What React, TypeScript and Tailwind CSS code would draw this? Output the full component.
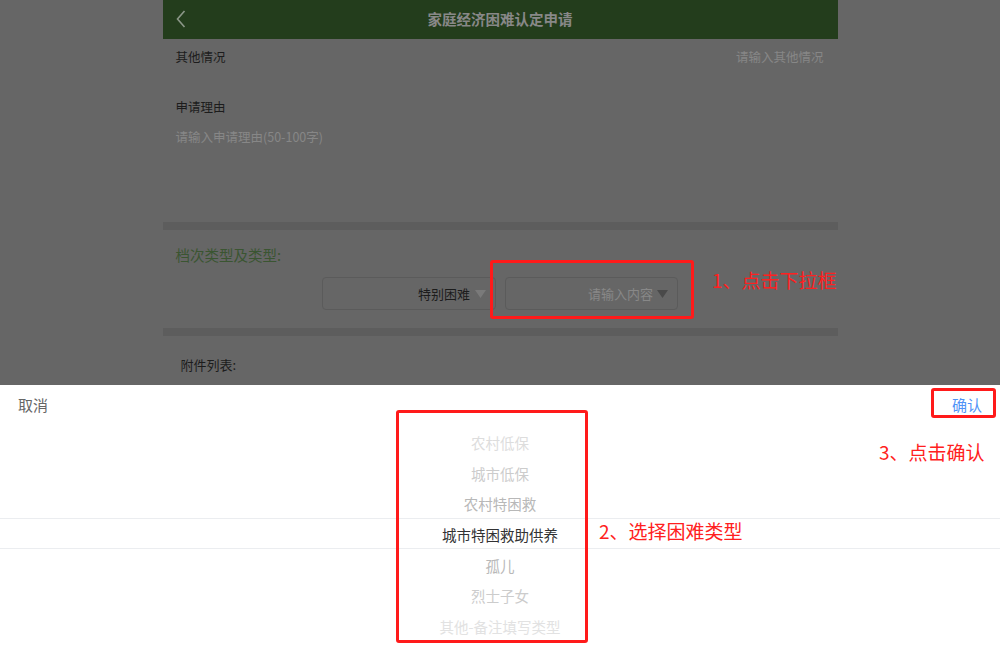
import React from "react";

const font = "font-['Noto_Sans_CJK_SC','Microsoft_YaHei',sans-serif]";

function Tri({ color }: { color: string }) {
  return (
    <svg width="11" height="8" viewBox="0 0 11 8" className="shrink-0">
      <path d="M0 0 H11 L5.5 8 Z" fill={color} />
    </svg>
  );
}

const items: { t: string; c: string }[] = [
  { t: "农村低保", c: "text-[#dddddd]" },
  { t: "城市低保", c: "text-[#cccccc]" },
  { t: "农村特困救", c: "text-[#b8b8b8]" },
  { t: "城市特困救助供养", c: "text-[#323233]" },
  { t: "孤儿", c: "text-[#b8b8b8]" },
  { t: "烈士子女", c: "text-[#cccccc]" },
  { t: "其他-备注填写类型", c: "text-[#e2e2e2]" },
];

export default function App() {
  return (
    <div className={`relative w-[1000px] h-[646px] overflow-hidden bg-white ${font}`}>
      {/* dimmed page */}
      <div className="h-[385px] bg-[#666666] overflow-hidden">
        <div className="w-[675px] mx-auto flex flex-col">
          <div className="relative h-[39px] bg-[#233d1c] flex items-center justify-center">
            <svg
              width="10"
              height="18"
              viewBox="0 0 10 18"
              className="absolute left-[13px] top-[10px]"
            >
              <path d="M8.5 1 L1.5 9 L8.5 17" fill="none" stroke="#8b9788" strokeWidth="1.6" />
            </svg>
            <span className="text-[14.5px] font-bold text-[#888888] leading-none">家庭经济困难认定申请</span>
          </div>
          <div className="h-[36px] flex items-center justify-between px-[13px] text-[12.5px] leading-none">
            <span className="text-[#1c1c1c]">其他情况</span>
            <span className="text-[#878787] pr-[1px]">请输入其他情况</span>
          </div>
          <div className="px-[13px] pt-[24px] text-[12.5px]">
            <div className="h-[16px] leading-[16px] text-[#1c1c1c]">申请理由</div>
            <div className="mt-[14px] h-[16px] leading-[16px] text-[#878787]">请输入申请理由(50-100字)</div>
          </div>
          <div className="mt-[77px] h-[8px] bg-[#5d5d5d]" />
          <div className="pt-[15px] px-[13px]">
            <div className="h-[20px] leading-[20px] text-[14.5px] text-[#3a5531]">档次类型及类型:</div>
          </div>
          <div className="mt-[12px] flex justify-center gap-[9px]">
            <div className="w-[174px] h-[33px] border border-[#5b5b5b] rounded-[4px] flex items-center justify-end gap-[5px] pr-[9px]">
              <span className="text-[13px] text-[#1c1c1c] leading-none">特别困难</span>
              <Tri color="#7a7a7a" />
            </div>
            <div className="w-[173px] h-[33px] border border-[#5b5b5b] rounded-[4px] flex items-center justify-end gap-[4px] pr-[9px]">
              <span className="text-[13px] text-[#888888] leading-none">请输入内容</span>
              <Tri color="#4a4a4a" />
            </div>
          </div>
          <div className="mt-[18px] h-[8px] bg-[#5d5d5d]" />
          <div className="pt-[20px] pl-[18px]">
            <div className="h-[18px] leading-[18px] text-[13px] text-[#1c1c1c]">附件列表:</div>
          </div>
        </div>
      </div>

      {/* picker */}
      <div className="relative h-[261px] bg-white">
        <div className="h-[38px] flex items-center justify-between px-[18px] text-[15px] leading-none">
          <span className="text-[#666666]">取消</span>
          <span className="text-[#4f93f7]">确认</span>
        </div>
        <div className="pt-[5px] flex flex-col items-center">
          {items.map((it) => (
            <div
              key={it.t}
              className={`h-[30.67px] flex items-center justify-center text-[14.5px] leading-none ${it.c}`}
            >
              {it.t}
            </div>
          ))}
        </div>
        <div className="absolute left-0 right-0 top-[133px] h-px bg-[#ebedf0]" />
        <div className="absolute left-0 right-0 top-[163px] h-px bg-[#ebedf0]" />
      </div>

      {/* annotations */}
      <div className="absolute left-[490px] top-[260px] w-[204px] h-[59px] border-[3px] border-[#ff1a1a] rounded-[3px]" />
      <div className="absolute left-[712px] top-[269px] h-[22px] leading-[22px] text-[19px] text-[#ff2020]">1、点击下拉框</div>
      <div className="absolute left-[396px] top-[410px] w-[192px] h-[233px] border-[3px] border-[#ff1a1a] rounded-[3px]" />
      <div className="absolute left-[599px] top-[520px] h-[22px] leading-[22px] text-[19px] text-[#ff2020]">2、选择困难类型</div>
      <div className="absolute left-[931px] top-[388px] w-[65px] h-[30px] border-[3px] border-[#ff1a1a] rounded-[3px]" />
      <div className="absolute left-[879px] top-[441px] h-[22px] leading-[22px] text-[19px] text-[#ff2020]">3、点击确认</div>
    </div>
  );
}
